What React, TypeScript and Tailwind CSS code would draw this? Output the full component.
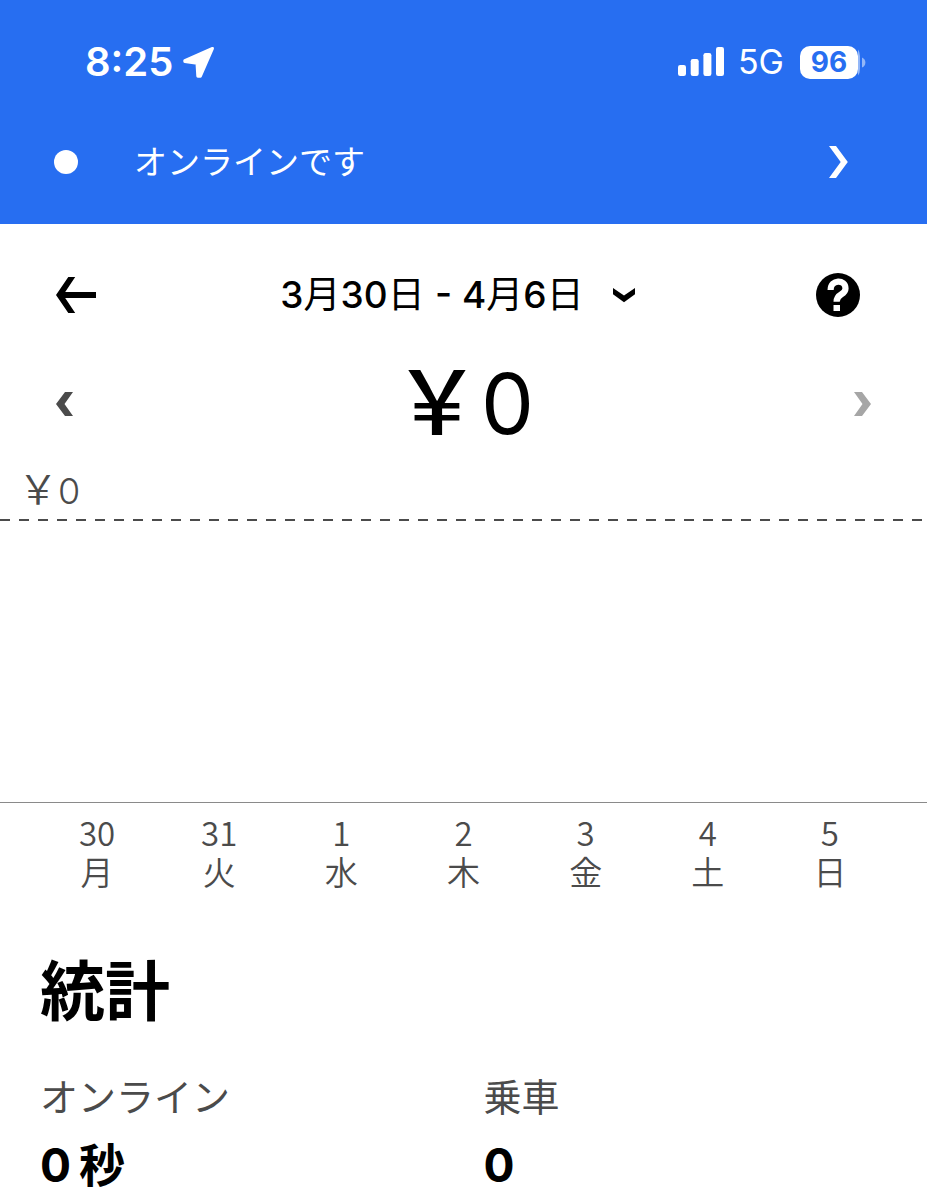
import React from 'react';

const days = [
  { date: '30', weekday: '月' },
  { date: '31', weekday: '火' },
  { date: '1', weekday: '水' },
  { date: '2', weekday: '木' },
  { date: '3', weekday: '金' },
  { date: '4', weekday: '土' },
  { date: '5', weekday: '日' },
];

const stats = [
  { label: 'オンライン', value: '0', unit: '秒' },
  { label: '乗車', value: '0', unit: '' },
];

// Full-width yen sign
const YEN = '\uFFE5';

const LocationIcon = () => (
  <svg className="h-8 w-8" viewBox="0 0 32 32" fill="white" stroke="white" strokeWidth="3" strokeLinejoin="round" aria-hidden="true">
    <path d="M29.5 2.4 1.8 14.6V15.6L14 17.2 14.8 30.2H17.4Z" />
  </svg>
);

const SignalIcon = () => (
  <svg className="h-8 w-[46px]" viewBox="0 0 46 32" fill="white" aria-hidden="true">
    <rect x="0" y="19" width="8" height="11" rx="2.2" />
    <rect x="12.7" y="13" width="8" height="17" rx="2.2" />
    <rect x="25.4" y="7" width="8" height="23" rx="2.2" />
    <rect x="38" y="1" width="8" height="29" rx="2.2" />
  </svg>
);

const StatusBar = () => (
  <div className="flex h-11 items-center justify-between">
    <div className="flex items-center gap-[10px] pl-[85px]">
      <span className="text-[40px] leading-[44px] font-semibold">8:25</span>
      <LocationIcon />
    </div>
    <div className="flex items-center pr-[61px]">
      <SignalIcon />
      <span className="ml-[14px] text-[34px] leading-[44px]">5G</span>
      <div className="ml-4 flex items-center">
        <span className="flex h-[33px] w-[58px] items-center justify-center rounded-[10px] bg-white text-[28px] leading-[33px] font-bold text-[#276ef1]">
          96
        </span>
        <svg className="h-[33px] w-2" viewBox="0 0 8 33" fill="white" fillOpacity="0.5" aria-hidden="true">
          <path d="M-4 0.5Q2 3 2 10V23Q2 30-4 32.5Q0 29 0 23V10Q0 4-4 .5Z" />
          <path d="M4 11.5Q7.4 13 7.4 16.5T4 21.5Z" />
        </svg>
      </div>
    </div>
  </div>
);

const OnlineBanner = () => (
  <button className="mt-14 flex h-11 w-full items-center pr-[78px] pl-[54px] text-left">
    <span className="h-6 w-6 rounded-full bg-white" />
    <span className="ml-14 flex-1 text-[33px] leading-[44px]">オンラインです</span>
    <svg className="h-8 w-5" viewBox="0 0 20 32" fill="white" aria-hidden="true">
      <path d="M0 0H7L18.8 16 7 32H0L11.7 16Z" />
    </svg>
  </button>
);

const App: React.FC = () => {
  return (
    <div className="min-h-screen bg-white font-[Inter,'Noto_Sans_CJK_JP',sans-serif] text-black">
      <header className="bg-[#276ef1] pt-10 pb-10 text-white">
        <StatusBar />
        <OnlineBanner />
      </header>

      <main>
        <nav className="flex items-center justify-between pt-[47px] pr-[67px] pl-14">
          <button aria-label="戻る">
            <svg className="h-9 w-11" viewBox="0 0 44 36" aria-hidden="true">
              <path d="M12.3 0H19.2L9.2 15H40V21H9.2L19.2 36H12.3L0 18Z" />
            </svg>
          </button>
          <button className="flex items-center gap-7 text-[37px] leading-[48px]">
            <span>
              <b className="font-medium">3</b>月<b className="font-medium">30</b>日 <b className="font-medium">- 4</b>月
              <b className="font-medium">6</b>日
            </span>
            <svg className="h-4 w-6" viewBox="0 0 24 16" aria-hidden="true">
              <path d="M1 1 12 8.4 23 1V7.2L12 15.3 1 7.2Z" />
            </svg>
          </button>
          <button aria-label="ヘルプ">
            <svg className="h-11 w-11" viewBox="0 0 44 44" aria-hidden="true">
              <circle cx="22" cy="22" r="22" />
              <path d="M14.6 17C14.6 6 29.5 6 29.5 15.5C29.5 22.5 20.6 20 20.6 28.7" fill="none" stroke="white" strokeWidth="6.2" />
              <path d="M17.5 32H24V38H17.5Z" fill="white" />
            </svg>
          </button>
        </nav>

        <section className="mt-[37px] flex items-center justify-between px-14">
          <button aria-label="前の週">
            <svg className="h-6 w-[17px]" viewBox="0 0 17 24" fill="#4b4b4b" aria-hidden="true">
              <path d="M9 0H17L8.5 12 17 24H9L0 12Z" />
            </svg>
          </button>
          <h1 className="text-[84px] leading-[96px]">
            <span className="text-[88px] leading-none font-medium">{YEN}</span>0
          </h1>
          <button aria-label="次の週" disabled>
            <svg className="h-6 w-[17px]" viewBox="0 0 17 24" fill="#a6a6a6" aria-hidden="true">
              <path d="M8 0H0L8.5 12 0 24H8L17 12Z" />
            </svg>
          </button>
        </section>

        <section className="mt-[18px] text-[#4b4b4b]">
          <p className="pb-2 pl-[18px] text-[36px] leading-10 font-[350]">
            <span className="text-[40px] leading-none">{YEN}</span>0
          </p>
          <div className="h-[2px] bg-[repeating-linear-gradient(90deg,#4b4b4b_0_10px,transparent_10px_19px)]" />
          <div className="h-[282px] border-b border-[#8a8a8a]" />
          <ul className="grid grid-cols-7 px-9 pt-[10px] text-center font-['Noto_Sans_CJK_JP',sans-serif] text-[33px] leading-[39px] font-[350]">
            {days.map((day) => (
              <li key={day.date}>
                <p>{day.date}</p>
                <p>{day.weekday}</p>
              </li>
            ))}
          </ul>
        </section>

        <section className="px-10 pt-[61px] pb-2">
          <h2 className="text-[65px] leading-[80px] font-bold">統計</h2>
          <dl className="mt-[41px] grid grid-cols-2 gap-10">
            {stats.map((stat) => (
              <div key={stat.label}>
                <dt className="text-[38px] leading-[48px] text-[#4b4b4b]">{stat.label}</dt>
                <dd className="mt-4 flex items-center gap-2 text-[46px] leading-[56px] font-bold">
                  {stat.value}
                  {stat.unit && <span>{stat.unit}</span>}
                </dd>
              </div>
            ))}
          </dl>
        </section>
      </main>
    </div>
  );
};

export default App;
